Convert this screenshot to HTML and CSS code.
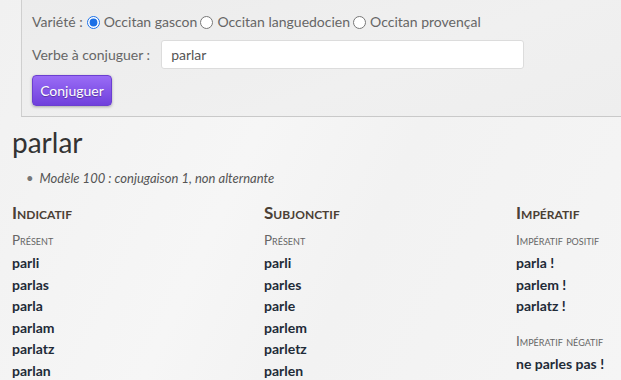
FILE: index.html
```html
<!DOCTYPE html>
<html lang="fr">
<head>
    <meta charset="UTF-8">
    <meta name="viewport" content="width=device-width, initial-scale=1.0">
    <title>Conjugaison - parlar</title>
    <link rel="stylesheet" href="styles.css">
</head>
<body>
    <div class="search-panel">
        <div class="form-row">
            <span class="label">Variété :</span>
            <label class="radio"><input type="radio" name="variete" value="gascon" checked> Occitan gascon</label>
            <label class="radio"><input type="radio" name="variete" value="languedocien"> Occitan languedocien</label>
            <label class="radio"><input type="radio" name="variete" value="provencal"> Occitan provençal</label>
        </div>
        <div class="form-row">
            <label class="label" for="verbe">Verbe à conjuguer :</label>
            <input type="text" id="verbe" class="verb-input" value="parlar">
        </div>
        <button class="btn-conjuguer" type="button">Conjuguer</button>
    </div>

    <div class="result">
        <h1 class="verb-title">parlar</h1>
        <ul class="verb-info">
            <li>Modèle 100 : conjugaison 1, non alternante</li>
        </ul>

        <div class="modes">
            <div class="mode">
                <h2 class="mode-title">Indicatif</h2>
                <div class="tense-title">Présent</div>
                <div class="form">parli</div>
                <div class="form">parlas</div>
                <div class="form">parla</div>
                <div class="form">parlam</div>
                <div class="form">parlatz</div>
                <div class="form">parlan</div>
            </div>
            <div class="mode">
                <h2 class="mode-title">Subjonctif</h2>
                <div class="tense-title">Présent</div>
                <div class="form">parli</div>
                <div class="form">parles</div>
                <div class="form">parle</div>
                <div class="form">parlem</div>
                <div class="form">parletz</div>
                <div class="form">parlen</div>
            </div>
            <div class="mode">
                <h2 class="mode-title">Impératif</h2>
                <div class="tense-title">Impératif positif</div>
                <div class="form">parla !</div>
                <div class="form">parlem !</div>
                <div class="form">parlatz !</div>
                <div class="tense-title spaced">Impératif négatif</div>
                <div class="form">ne parles pas !</div>
            </div>
        </div>
    </div>
</body>
</html>
```

FILE: styles.css
```css
* {
    margin: 0;
    padding: 0;
    box-sizing: border-box;
}

body {
    font-family: Lato, 'Open Sans', sans-serif;
    background: linear-gradient(115deg, #f1f1f1 0%, #f6f6f6 40%, #f2f2f2 60%, #f5f5f5 100%);
    color: #333;
    min-height: 100vh;
    overflow: hidden;
}

.search-panel {
    margin-left: 21px;
    background: linear-gradient(160deg, #ececec 0%, #f0f0f0 60%, #eeeeee 100%);
    border-left: 1px solid #cfcfcf;
    border-bottom: 1px solid #c9c9c9;
    padding: 14px 10px 10px 10px;
}

.form-row {
    display: flex;
    align-items: center;
    font-size: 14px;
    line-height: 16px;
    color: #666;
}

.form-row + .form-row {
    margin-top: 10px;
    margin-bottom: 6px;
}

.label {
    margin-right: 4px;
}

.radio {
    display: flex;
    align-items: center;
    margin-right: 3px;
}

.radio input {
    width: 13px;
    height: 13px;
    margin: 0 4px 0 0;
    accent-color: #1a6fe6;
}

.verb-input {
    width: 363px;
    height: 29px;
    margin-left: 7px;
    padding: 0 9px;
    border: 1px solid #dcdcdc;
    border-radius: 3px;
    background: white;
    font-family: inherit;
    font-size: 14px;
    color: #555;
}

.verb-input:focus {
    outline: none;
}

.btn-conjuguer {
    display: block;
    width: 80px;
    height: 31px;
    border: 1px solid #6b3fd0;
    border-radius: 4px;
    background: linear-gradient(#9a6cf6, #7040dc);
    box-shadow: 0 1px 3px rgba(0, 0, 0, 0.3);
    color: white;
    font-family: inherit;
    font-size: 14px;
    text-shadow: 0 1px 1px rgba(0, 0, 0, 0.3);
    cursor: pointer;
}

.result {
    padding: 0 12px;
}

.verb-title {
    font-size: 28px;
    font-weight: normal;
    color: #333;
    margin-top: 8px;
    line-height: 34px;
}

.verb-info {
    margin: 11px 0 0 23px;
    font-size: 13px;
    font-style: italic;
    color: #555;
    list-style: none;
}

.verb-info li::before {
    content: '•';
    font-style: normal;
    color: #777;
    margin: 0 6px 0 -9px;
}

.modes {
    display: grid;
    grid-template-columns: 252px 252px 1fr;
    margin-top: 17px;
}

.mode-title {
    font-size: 17px;
    font-weight: bold;
    font-variant: small-caps;
    color: #4b4035;
    line-height: 20px;
    margin-bottom: 7px;
}

.tense-title {
    font-size: 13.5px;
    font-variant: small-caps;
    color: #666;
    line-height: 20px;
    margin-bottom: 2px;
}

.tense-title.spaced {
    margin-top: 14px;
}

.form {
    font-size: 14px;
    font-weight: bold;
    color: #1f2b38;
    line-height: 21.5px;
}
```
